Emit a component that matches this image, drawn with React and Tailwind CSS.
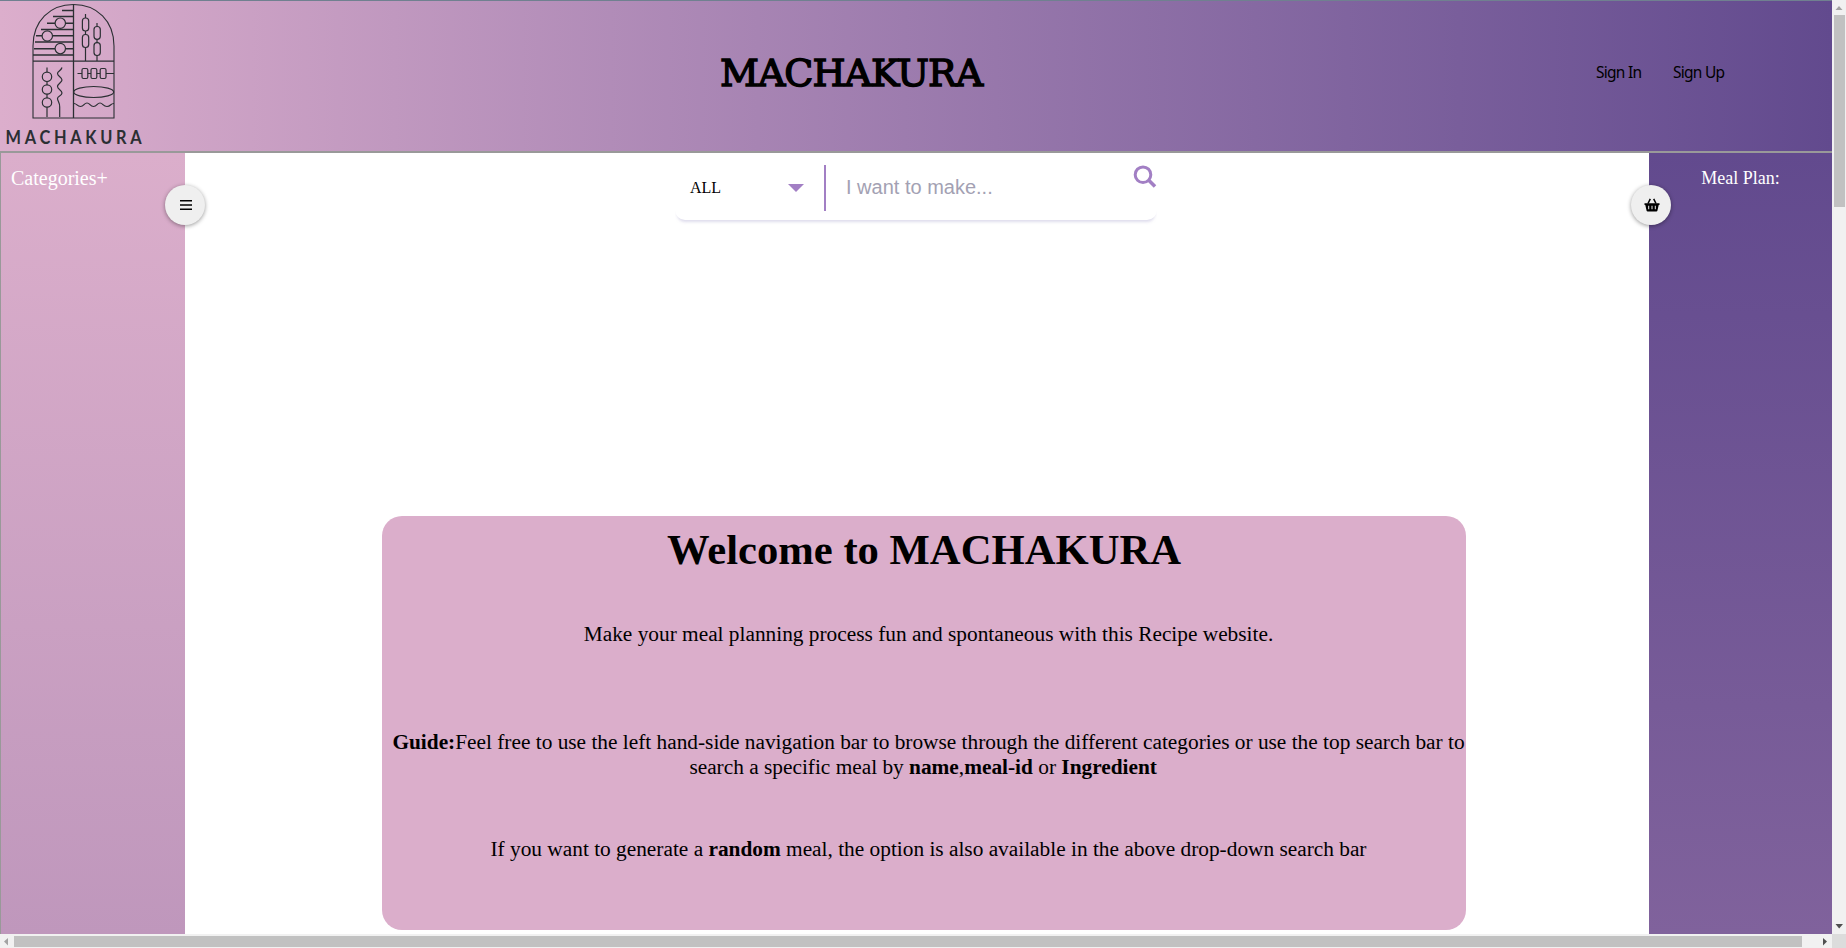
function Logo() {
  return (
    <svg width="146" height="149" viewBox="0 0 146 149" fill="none" stroke="#2b2f33" strokeWidth="1.1">
      <path d="M33 118V46C33 21 50 4.500 73.5 4.500S114 21 114 46V118Z" />
      <path d="M73.5 5V118M33 61.200H114" strokeWidth="1.3" />
      <path d="M62 10.5H73M53 16.500H73M47 23.200H55M66 23.200H73M41 29.500H73M36 35.700H42M53 35.700H73M35 42H73M34 48.700H55M66 48.700H73M33 55H73" strokeWidth="1.4" />
      <g strokeWidth="1.2">
        <circle cx="60.3" cy="23.200" r="5.2" />
        <circle cx="47.3" cy="36" r="5.2" />
        <circle cx="60.3" cy="48.600" r="5.2" />
        <path d="M85.5 14V18M85.5 31V35M85.5 47V61M97 23V26M97 39V43M97 55V61" />
        <rect x="82.4" y="18" width="6.3" height="13" rx="3" />
        <rect x="82.4" y="34.5" width="6.3" height="13" rx="3" />
        <rect x="94" y="26.5" width="6.3" height="12.8" rx="3" />
        <rect x="94" y="42.7" width="6.3" height="12.8" rx="3" />
        <circle cx="47" cy="76.8" r="4.7" />
        <circle cx="47" cy="89.5" r="4.7" />
        <circle cx="47" cy="102.5" r="4.7" />
        <path d="M47 67.5V72M47 81.5V85M47 94V98M47 107V117" />
        <path d="M62 67.5C61 71 57.5 71 57.5 73.5S62 77.5 62 80S57.5 83.5 57.5 86.5S62 90 62 93S57.5 96 57.5 98.5S60 103 59.7 107V117" />
        <path d="M77.5 73.5H82M87.7 73.5H91M96.7 73.5H100M106 73.5H114" />
        <rect x="82" y="68.5" width="5.8" height="10" rx="1.5" />
        <rect x="91" y="68.5" width="5.8" height="10" rx="1.5" />
        <rect x="100.2" y="68.5" width="5.8" height="10" rx="1.5" />
        <ellipse cx="93.7" cy="92" rx="20" ry="5.5" />
        <path d="M74 103.5C77 103.500 77 106.500 80.500 106.500S84 103 87 103S90 106.500 93.500 106.500S97 103 100 103S103 106.500 107 106.500S110 103.500 114 103.500" />
      </g>
      <text transform="translate(5.500 144) scale(.84 1)" fill="#2b2f33" stroke="none" fontFamily="Lato" fontWeight="700" fontSize="19.5" letterSpacing="4.400">MACHAKURA</text>
    </svg>
  );
}

function BasketIcon() {
  return (
    <svg className="-mt-px ml-px" width="16" height="14" viewBox="0 0 16 14">
      <path fill="currentColor" fillRule="evenodd" d="M0.500 5.200H15.500V7H14.700L13.400 12.700Q13.200 13.500 12.300 13.500H3.700Q2.800 13.500 2.600 12.700L1.300 7H0.500ZM4.200 7.800V11.200H5.200V7.800ZM7.500 7.800V11.200H8.500V7.800ZM10.800 7.800V11.200H11.800V7.800Z" />
      <path d="M4 5.500L6.300 0.800M12 5.500L9.700 0.800" stroke="currentColor" strokeWidth="1.500" />
    </svg>
  );
}

export default function App() {
  return (
    <div className="grid h-[948px] w-[1846px] grid-cols-[1832px_14px] grid-rows-[934px_14px] overflow-hidden bg-white font-['Liberation_Serif',serif] text-black">
      <div className="flex flex-col overflow-hidden">
        <header className="grid h-[153px] shrink-0 grid-cols-[185px_1fr_236px] border-t border-b-2 border-t-[#708090] border-b-[#999999] bg-linear-to-r from-[#dcaecc] to-[#624a8e]">
          <div className="-mt-px"><Logo /></div>
          <h1 className="mt-[46px] ml-[535px] w-[290px] font-['DejaVu_Serif',serif] text-[38px] leading-[52px] whitespace-nowrap [-webkit-text-stroke:1.4px_black] tracking-[-1px]">MACHAKURA</h1>
          <nav className="flex items-start pt-[59px] font-['Noto_Sans',sans-serif] text-[15.500px] leading-6 tracking-[-0.75px] whitespace-nowrap">
            <a className="w-[77px]">Sign In</a>
            <a>Sign Up</a>
          </nav>
        </header>

        <div className="flex min-h-0 flex-1">
          <aside className="relative w-[185px] shrink-0 border-l border-[#999999] bg-linear-to-b from-[#dbaecb] to-[#bf97bc] pt-[13px] pl-[10px] text-[20px] leading-6 text-white">
            Categories+
            <button className="absolute top-8 -right-5 z-10 flex size-10 items-center justify-center rounded-full bg-[#efefef] text-black shadow-[0_1px_4px_rgba(0,0,0,0.4)]">
              <svg className="ml-px" width="12" height="12" viewBox="0 0 12 12"><path d="M0 1H12V2.600H0ZM0 5.200H12V6.800H0ZM0 9.400H12V11H0Z" fill="currentColor" /></svg>
            </button>
          </aside>

          <main className="flex flex-1 flex-col items-center">
            <form className="-ml-[2px] flex h-[67px] w-[482px] rounded-[10px] bg-white shadow-[0_4px_3px_-2px_rgba(160,155,200,0.35)] [clip-path:inset(0_0_-8px_0)]">
              <div className="flex h-full w-[149px] items-center pt-[3px] pl-[15px] text-[16px]">
                <span>ALL</span>
                <svg className="ml-[67px]" width="16" height="8" viewBox="0 0 16 8"><path d="M0 0H16L8 8Z" fill="#a27fc4" /></svg>
              </div>
              <div className="mt-3 h-[46px] w-[2px] bg-[#a27fc4]" />
              <input className="h-full min-w-0 flex-1 bg-transparent pt-[2px] pl-[20px] font-['Liberation_Sans',sans-serif] text-[20px] outline-none placeholder:text-[#a3a1b3]" placeholder="I want to make..." />
              <svg className="mt-[12px]" width="24" height="24" viewBox="0 0 24 24" fill="none" stroke="#a27fc4" strokeWidth="3">
                <circle cx="10" cy="9.700" r="7.800" /><path d="M15.500 15L22 21.500" strokeWidth="3.500" />
              </svg>
            </form>

            <section className="mt-[296px] ml-[13px] h-[414px] w-[1084px] shrink-0 rounded-[20px] bg-[#dbaecb] pl-[10px] text-center text-[21.333px] leading-[25px]">
              <h2 className="-ml-[9px] pt-[9px] text-[42.667px] leading-[50px] font-bold">Welcome to MACHAKURA</h2>
              <p className="mt-[47px]">Make your meal planning process fun and spontaneous with this Recipe website.</p>
              <p className="mt-[83px] whitespace-nowrap"><b>Guide:</b>Feel free to use the left hand-side navigation bar to browse through the different categories or use the top search bar to<br />search a specific meal by <b>name</b>,<b>meal-id</b> or <b>Ingredient</b>&nbsp;&nbsp;</p>
              <p className="mt-[57px]">If you want to generate a <b>random</b> meal, the option is also available in the above drop-down search bar</p>
            </section>
          </main>

          <aside className="relative w-[183px] shrink-0 bg-linear-to-b from-[#624a8e] to-[#80629c] pt-[13px] text-center text-[18px] leading-6 text-white">
            Meal Plan:
            <button className="absolute top-8 -left-[18px] z-10 flex size-10 items-center justify-center rounded-full bg-[#efefef] text-black shadow-[0_1px_4px_rgba(0,0,0,0.4)]">
              <BasketIcon />
            </button>
          </aside>
        </div>
      </div>

      <div className="flex flex-col items-center bg-[#f1f1f1]">
        <svg width="14" height="15"><path d="M7 6L10.500 10H3.500Z" fill="#a3a3a3" /></svg>
        <div className="h-[192px] w-[11px] bg-[#c1c1c1]" />
        <svg className="mt-auto" width="14" height="14"><path d="M3.500 4H11L7.200 8.500Z" fill="#505050" /></svg>
      </div>
      <div className="flex items-center bg-[#f1f1f1]">
        <svg width="14" height="14"><path d="M4 7.500L8 4V11.500Z" fill="#a3a3a3" /></svg>
        <div className="h-[11px] w-[1788px] bg-[#c1c1c1]" />
        <svg className="ml-auto" width="14" height="14"><path d="M9 7.500L5 4V11.500Z" fill="#505050" /></svg>
      </div>
      <div className="bg-[#dcdcdc]" />
    </div>
  );
}
